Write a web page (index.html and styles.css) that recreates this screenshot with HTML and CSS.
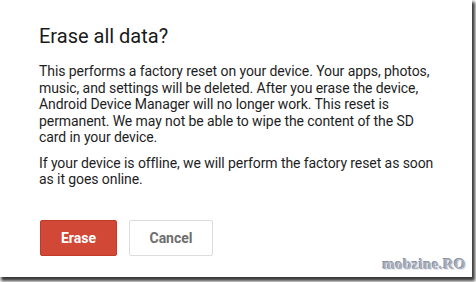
FILE: index.html
```html
<!DOCTYPE html>
<html>
<head>
<meta charset="utf-8">
<link rel="stylesheet" href="styles.css">
</head>
<body>
<div class="card">
  <h1 class="title">Erase all data?</h1>
  <p class="text">This performs a factory reset on your device. Your apps, photos, music, and settings will be deleted. After you erase the device, Android Device Manager will no longer work. This reset is permanent. We may not be able to wipe the content of the SD card in your device.</p>
  <p class="text">If your device is offline, we will perform the factory reset as soon as it goes online.</p>
  <div class="actions">
    <button class="btn btn-erase">Erase</button>
    <button class="btn btn-cancel">Cancel</button>
  </div>
  <div class="watermark">mobzine.RO</div>
</div>
</body>
</html>
```
FILE: styles.css
```css
html, body {
  margin: 0;
  padding: 0;
  background: #ffffff;
}
body {
  width: 476px;
  height: 282px;
  overflow: hidden;
}
.card {
  position: relative;
  box-sizing: border-box;
  width: 472px;
  height: 277px;
  background: #ffffff;
  box-shadow: 2px 3px 3px 1px #3a3a3a;
  padding: 24px 30px 0 39px;
  font-family: Roboto, "Liberation Sans", sans-serif;
  color: #222222;
}
.title {
  margin: 0 0 15px;
  font-size: 20px;
  line-height: 24px;
  font-weight: 400;
  color: #1a1a1a;
}
.text {
  margin: 0 0 9px;
  font-size: 14px;
  line-height: 16.5px;
  letter-spacing: -0.08px;
  color: #1e1e1e;
}
.actions {
  display: flex;
  gap: 12px;
  margin-top: 32px;
  padding-left: 1px;
}
.btn {
  box-sizing: border-box;
  height: 36px;
  border-radius: 2px;
  font-family: Roboto, "Liberation Sans", sans-serif;
  font-size: 14px;
  font-weight: 700;
  padding: 0;
}
.btn-erase {
  width: 77px;
  background: #d14836;
  border: 1px solid #c13b2a;
  color: #ffffff;
}
.btn-cancel {
  width: 84px;
  background: #ffffff;
  border: 1px solid #dcdcdc;
  color: #6e6e6e;
}
.watermark {
  position: absolute;
  right: 6px;
  bottom: 4px;
  font-family: "Liberation Serif", serif;
  font-weight: 700;
  font-size: 15px;
  color: #a7adbb;
  text-shadow: 1px 1px 0 #e6e8ee, -1px -1px 0 #8a90a0;
  letter-spacing: 0.3px;
}
```
